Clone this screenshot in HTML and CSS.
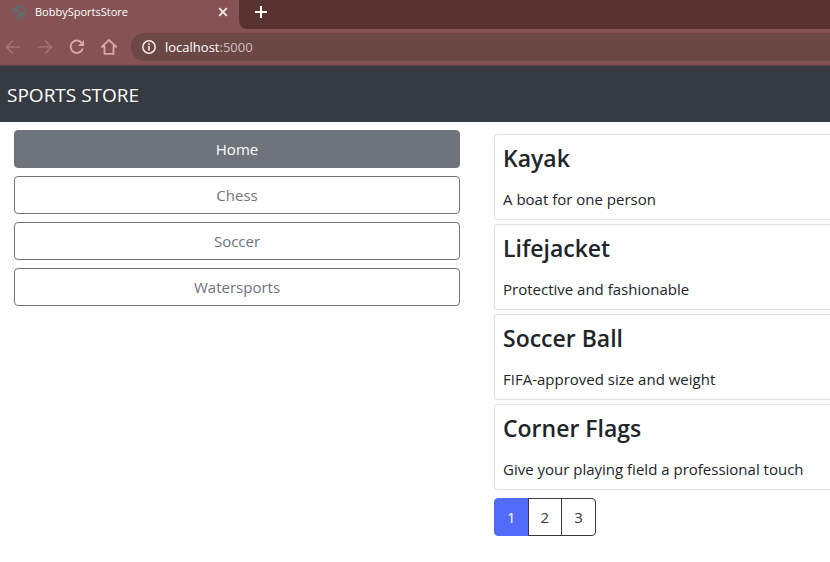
FILE: index.html
```html
<!DOCTYPE html>
<html lang="en">
<head>
<meta charset="utf-8">
<title>BobbySportsStore</title>
<link rel="stylesheet" href="styles.css">
</head>
<body>
<header class="browser">
  <div class="tabs">
    <div class="tab">
      <svg class="favicon" width="14" height="14" viewBox="0 0 14 14" aria-hidden="true"><circle cx="7" cy="7" r="7" fill="#63686c"/><path d="M8.500 1.500L6.500 3.500L5 4.500L6.500 5.500L8.500 5.500L9 7L11 7.500L12.600 6.500A5.700 5.700 0 0 0 8.500 1.500ZM1.400 6.500L5 6.800L7 8.500L6 10L6 12.500A5.700 5.700 0 0 1 1.400 6.500ZM8 12.500L9 10.500L11.500 9.500A5.700 5.700 0 0 1 8 12.500Z" fill="#855354"/></svg>
      <span class="tab-title">BobbySportsStore</span>
      <button class="icon-button close" type="button" aria-label="Close tab"><svg width="10" height="10" viewBox="0 0 10 10"><path d="M1.200 1.200L8.800 8.800M8.800 1.200L1.200 8.800" stroke="#f6eded" stroke-width="1.700"/></svg></button>
    </div>
    <div class="strip">
      <button class="icon-button" type="button" aria-label="New tab"><svg width="12" height="12" viewBox="0 0 12 12"><path d="M6 0V12M0 6H12" stroke="#fff" stroke-width="2"/></svg></button>
    </div>
  </div>
  <div class="toolbar">
    <div class="nav-buttons">
      <button class="icon-button" type="button" aria-label="Back"><svg width="16" height="16" viewBox="0 0 16 16"><path d="M15 8H2M8 1.500L1.500 8L8 14.500" fill="none" stroke="#a87373" stroke-width="1.700"/></svg></button>
      <button class="icon-button" type="button" aria-label="Forward"><svg width="16" height="16" viewBox="0 0 16 16"><path d="M1 8H14M8 1.500L14.500 8L8 14.500" fill="none" stroke="#a87373" stroke-width="1.700"/></svg></button>
      <button class="icon-button" type="button" aria-label="Reload"><svg width="16" height="16" viewBox="0 0 16 16"><path d="M13.800 9.500A6.200 6.200 0 1 1 12.800 4" fill="none" stroke="#dda5a3" stroke-width="1.900"/><path d="M15 1V7H9Z" fill="#dda5a3"/></svg></button>
      <button class="icon-button" type="button" aria-label="Home page"><svg width="16" height="16" viewBox="0 0 16 16"><path d="M3.500 7.500V14.800H12.500V7.500H15L8 1L1 7.500Z" fill="none" stroke="#dda5a3" stroke-width="1.800"/></svg></button>
    </div>
    <div class="address">
      <svg width="14" height="14" viewBox="0 0 14 14" aria-hidden="true"><circle cx="7" cy="7" r="6.200" fill="none" stroke="#f3e9e8" stroke-width="1.500"/><path d="M7 6V10.500M7 3.300V5" stroke="#f3e9e8" stroke-width="1.700"/></svg>
      <span class="url">localhost<span class="port">:5000</span></span>
    </div>
  </div>
</header>
<nav class="navbar"><a class="brand" href="#">SPORTS STORE</a></nav>
<div class="page">
  <nav class="categories" aria-label="Categories">
    <a class="category active" href="#">Home</a>
    <a class="category" href="#">Chess</a>
    <a class="category" href="#">Soccer</a>
    <a class="category" href="#">Watersports</a>
  </nav>
  <main class="products">
    <article class="card"><h2>Kayak</h2><p>A boat for one person</p></article>
    <article class="card"><h2>Lifejacket</h2><p>Protective and fashionable</p></article>
    <article class="card"><h2>Soccer Ball</h2><p>FIFA-approved size and weight</p></article>
    <article class="card"><h2>Corner Flags</h2><p>Give your playing field a professional touch</p></article>
    <nav class="pagination" aria-label="Pages">
      <a class="current" href="#">1</a><a href="#">2</a><a href="#">3</a>
    </nav>
  </main>
</div>
</body>
</html>
```
FILE: styles.css
```css
* { box-sizing: border-box; }

body {
  margin: 0;
  background: #fff;
  color: #212529;
  font: 15px/24px "Open Sans", "Noto Sans", sans-serif;
}

a { color: inherit; text-decoration: none; }

h2, p { margin: 0; }

svg { display: block; }

.icon-button {
  display: flex;
  padding: 0;
  border: 0;
  background: none;
}

.browser {
  background: #855354;
  border-bottom: 1px solid #5c4445;
}

.tabs {
  display: flex;
  height: 29px;
  background: #855354;
}

.tab {
  display: flex;
  align-items: center;
  flex: 0 0 239px;
  padding: 0 11px 5px 12px;
}

.tab-title {
  flex: 1;
  margin-left: 9px;
  color: #fff;
  font-size: 11px;
  line-height: 16px;
}

.strip {
  display: flex;
  align-items: center;
  flex: 1;
  padding: 0 16px 5px;
  border-bottom-left-radius: 8px;
  background: #5b3232;
}

.toolbar {
  display: flex;
  align-items: center;
  height: 36px;
  padding-left: 5px;
}

.nav-buttons {
  display: flex;
  gap: 16px;
}

.address {
  display: flex;
  align-items: center;
  flex: 1;
  gap: 9px;
  height: 28px;
  margin-left: 14px;
  padding-left: 11px;
  border-radius: 14px 0 0 14px;
  background: #6b4746;
}

.url {
  color: #fff;
  font-size: 13px;
  line-height: 20px;
}

.port { color: #d0bfbf; }

.navbar {
  padding: 14px 7px 12px;
  background: #363a41;
}

.brand {
  display: block;
  color: #fff;
  font-size: 19px;
  line-height: 30px;
}

.page {
  display: grid;
  grid-template-columns: 446fr 336fr;
  gap: 34px;
  padding: 8px 0 0 14px;
}

.categories {
  display: flex;
  flex-direction: column;
  align-self: start;
  gap: 8px;
}

.category {
  padding: 6px 12px;
  border: 1px solid #6f737c;
  border-radius: 4px;
  color: #6f737c;
  text-align: center;
}

.category.active {
  background: #6f737c;
  color: #fff;
}

.products {
  display: flex;
  flex-direction: column;
  gap: 4px;
  padding-top: 4px;
}

.card {
  padding: 8px;
  border: 1px solid #dedfe0;
  border-right: 0;
  border-radius: 4px 0 0 4px;
}

.card h2 {
  margin-bottom: 14px;
  font-size: 23px;
  font-weight: 600;
  line-height: 30px;
}

.pagination {
  display: flex;
  margin-top: 4px;
}

.pagination a {
  padding: 6px 12px;
  border: 1px solid #343a40;
  margin-left: -1px;
  color: #343a40;
}

.pagination a:first-child {
  margin-left: 0;
  border-radius: 4px 0 0 4px;
}

.pagination a:last-child { border-radius: 0 4px 4px 0; }

.pagination .current {
  border-color: #526bf8;
  background: #526bf8;
  color: #fff;
}
```
